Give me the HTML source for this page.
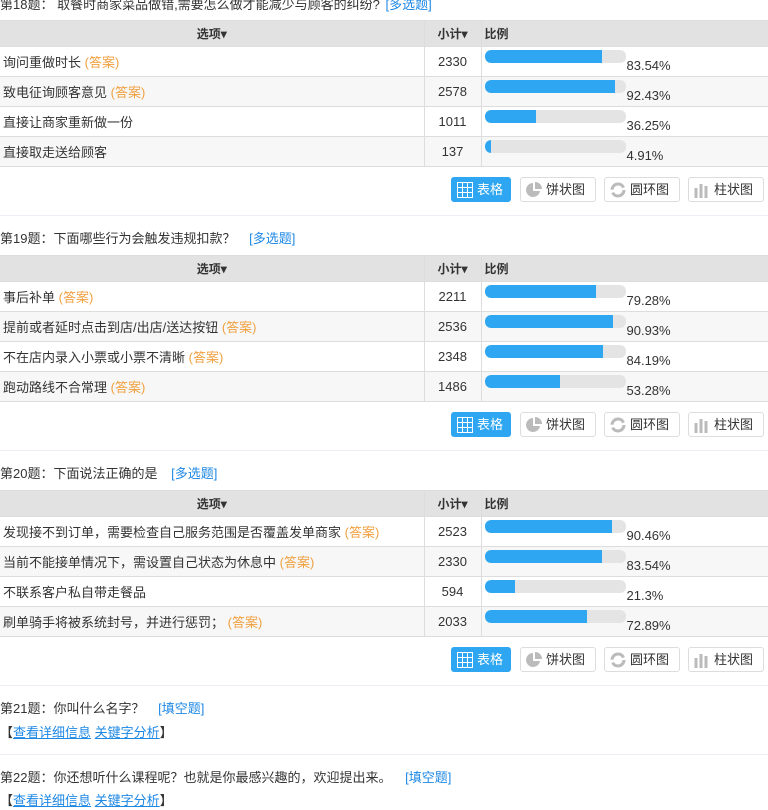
<!DOCTYPE html><html><head><meta charset="utf-8"><style>
*{margin:0;padding:0;box-sizing:border-box}
body{width:768px;height:808px;overflow:hidden;background:#fff;font-family:"Liberation Sans","Noto Sans CJK SC",sans-serif;font-size:13px;color:#333;position:relative}
.a{position:absolute}
.t{left:0;white-space:nowrap;line-height:18px}
.t .q{color:#1e88e5;margin-left:10px}
table{position:absolute;left:0;width:768px;border-collapse:collapse;table-layout:fixed}
td,th{border:1px solid #ddd;height:30px;padding:0 3px;white-space:nowrap}
th{height:26px;background:#e2e2e2;font-weight:bold;font-size:12px;color:#333}
tr:nth-child(odd) td{background:#f7f7f7}
td:first-child,th:first-child{border-left:none}
td:last-child,th:last-child{border-right:none}
.c{text-align:center}
.ans{color:#f0a040}
.bar{display:inline-block;width:141px;height:13px;background:#e4e4e4;border-radius:6px;vertical-align:-1px;overflow:hidden}
.bar i{display:block;height:13px;background:#2ea6f2;border-radius:6px 0 0 6px}
.pct{display:inline-block;vertical-align:-8px;margin-left:1px}
.btn{position:absolute;height:25px;border:1px solid #ddd;border-radius:3px;background:#fff;line-height:23px;font-size:13px;padding-left:25px;color:#333}
.btn.on{background:#2ea6f2;border-color:#2ea6f2;color:#fff}
.btn svg{position:absolute;left:5px;top:4px}
.hr{position:absolute;left:0;width:768px;height:1px;background:#eceef5}
a{color:#1e88e5;text-decoration:underline}
</style></head><body>

<div class="a t" style="top:-4px">第18题： 取餐时商家菜品做错,需要怎么做才能减少与顾客的纠纷? <span class="q" style="margin-left:2px">[多选题]</span></div>
<table style="top:20px"><colgroup><col style="width:424px"><col style="width:57px"><col></colgroup>
<tr><th>选项▾</th><th>小计▾</th><th style="text-align:left">比例</th></tr>
<tr><td>询问重做时长 <span class="ans">(答案)</span></td><td class="c">2330</td><td><span class="bar"><i style="width:83.54%"></i></span><span class="pct">83.54%</span></td></tr>
<tr><td>致电征询顾客意见 <span class="ans">(答案)</span></td><td class="c">2578</td><td><span class="bar"><i style="width:92.43%"></i></span><span class="pct">92.43%</span></td></tr>
<tr><td>直接让商家重新做一份</td><td class="c">1011</td><td><span class="bar"><i style="width:36.25%"></i></span><span class="pct">36.25%</span></td></tr>
<tr><td>直接取走送给顾客</td><td class="c">137</td><td><span class="bar"><i style="width:4.91%"></i></span><span class="pct">4.91%</span></td></tr>
</table>
<div class="a" style="top:177px;left:0;width:768px;height:25px">
<div class="btn on" style="left:451px;width:60px"><svg width="16" height="16"><rect x="0.5" y="0.5" width="15" height="15" fill="none" stroke="#fff"/><path d="M0 5.5H16M0 10.5H16M5.5 0V16M10.5 0V16" stroke="#fff"/></svg>表格</div>
<div class="btn" style="left:520px;width:76px"><svg width="16" height="16"><path d="M7 1A7 7 0 1 0 14 9H7Z" fill="#bbb"/><path d="M9 0V7H16A7 7 0 0 0 9 0Z" fill="#bbb"/></svg>饼状图</div>
<div class="btn" style="left:604px;width:76px"><svg width="16" height="16"><circle cx="8" cy="8" r="6" fill="none" stroke="#bbb" stroke-width="3" stroke-dasharray="16 3"/></svg>圆环图</div>
<div class="btn" style="left:688px;width:76px"><svg width="16" height="16"><path d="M2 6V16M7 2V16M12 4V16" stroke="#bbb" stroke-width="3"/></svg>柱状图</div>
</div>
<div class="hr" style="top:215px"></div>

<div class="a t" style="top:230px">第19题：下面哪些行为会触发违规扣款？ <span class="q">[多选题]</span></div>
<table style="top:255px"><colgroup><col style="width:424px"><col style="width:57px"><col></colgroup>
<tr><th>选项▾</th><th>小计▾</th><th style="text-align:left">比例</th></tr>
<tr><td>事后补单 <span class="ans">(答案)</span></td><td class="c">2211</td><td><span class="bar"><i style="width:79.28%"></i></span><span class="pct">79.28%</span></td></tr>
<tr><td>提前或者延时点击到店/出店/送达按钮 <span class="ans">(答案)</span></td><td class="c">2536</td><td><span class="bar"><i style="width:90.93%"></i></span><span class="pct">90.93%</span></td></tr>
<tr><td>不在店内录入小票或小票不清晰 <span class="ans">(答案)</span></td><td class="c">2348</td><td><span class="bar"><i style="width:84.19%"></i></span><span class="pct">84.19%</span></td></tr>
<tr><td>跑动路线不合常理 <span class="ans">(答案)</span></td><td class="c">1486</td><td><span class="bar"><i style="width:53.28%"></i></span><span class="pct">53.28%</span></td></tr>
</table>
<div class="a" style="top:412px;left:0;width:768px;height:25px">
<div class="btn on" style="left:451px;width:60px"><svg width="16" height="16"><rect x="0.5" y="0.5" width="15" height="15" fill="none" stroke="#fff"/><path d="M0 5.5H16M0 10.5H16M5.5 0V16M10.5 0V16" stroke="#fff"/></svg>表格</div>
<div class="btn" style="left:520px;width:76px"><svg width="16" height="16"><path d="M7 1A7 7 0 1 0 14 9H7Z" fill="#bbb"/><path d="M9 0V7H16A7 7 0 0 0 9 0Z" fill="#bbb"/></svg>饼状图</div>
<div class="btn" style="left:604px;width:76px"><svg width="16" height="16"><circle cx="8" cy="8" r="6" fill="none" stroke="#bbb" stroke-width="3" stroke-dasharray="16 3"/></svg>圆环图</div>
<div class="btn" style="left:688px;width:76px"><svg width="16" height="16"><path d="M2 6V16M7 2V16M12 4V16" stroke="#bbb" stroke-width="3"/></svg>柱状图</div>
</div>
<div class="hr" style="top:450px"></div>

<div class="a t" style="top:465px">第20题：下面说法正确的是 <span class="q">[多选题]</span></div>
<table style="top:490px"><colgroup><col style="width:424px"><col style="width:57px"><col></colgroup>
<tr><th>选项▾</th><th>小计▾</th><th style="text-align:left">比例</th></tr>
<tr><td>发现接不到订单，需要检查自己服务范围是否覆盖发单商家 <span class="ans">(答案)</span></td><td class="c">2523</td><td><span class="bar"><i style="width:90.46%"></i></span><span class="pct">90.46%</span></td></tr>
<tr><td>当前不能接单情况下，需设置自己状态为休息中 <span class="ans">(答案)</span></td><td class="c">2330</td><td><span class="bar"><i style="width:83.54%"></i></span><span class="pct">83.54%</span></td></tr>
<tr><td>不联系客户私自带走餐品</td><td class="c">594</td><td><span class="bar"><i style="width:21.3%"></i></span><span class="pct">21.3%</span></td></tr>
<tr><td>刷单骑手将被系统封号，并进行惩罚； <span class="ans">(答案)</span></td><td class="c">2033</td><td><span class="bar"><i style="width:72.89%"></i></span><span class="pct">72.89%</span></td></tr>
</table>
<div class="a" style="top:647px;left:0;width:768px;height:25px">
<div class="btn on" style="left:451px;width:60px"><svg width="16" height="16"><rect x="0.5" y="0.5" width="15" height="15" fill="none" stroke="#fff"/><path d="M0 5.5H16M0 10.5H16M5.5 0V16M10.5 0V16" stroke="#fff"/></svg>表格</div>
<div class="btn" style="left:520px;width:76px"><svg width="16" height="16"><path d="M7 1A7 7 0 1 0 14 9H7Z" fill="#bbb"/><path d="M9 0V7H16A7 7 0 0 0 9 0Z" fill="#bbb"/></svg>饼状图</div>
<div class="btn" style="left:604px;width:76px"><svg width="16" height="16"><circle cx="8" cy="8" r="6" fill="none" stroke="#bbb" stroke-width="3" stroke-dasharray="16 3"/></svg>圆环图</div>
<div class="btn" style="left:688px;width:76px"><svg width="16" height="16"><path d="M2 6V16M7 2V16M12 4V16" stroke="#bbb" stroke-width="3"/></svg>柱状图</div>
</div>
<div class="hr" style="top:685px"></div>

<div class="a t" style="top:700px">第21题：你叫什么名字？ <span class="q">[填空题]</span></div>
<div class="a t" style="top:724px">【<a>查看详细信息</a> <a>关键字分析</a>】</div>
<div class="hr" style="top:754px"></div>
<div class="a t" style="top:769px">第22题：你还想听什么课程呢？也就是你最感兴趣的，欢迎提出来。 <span class="q">[填空题]</span></div>
<div class="a t" style="top:792px">【<a>查看详细信息</a> <a>关键字分析</a>】</div>
</body></html>
